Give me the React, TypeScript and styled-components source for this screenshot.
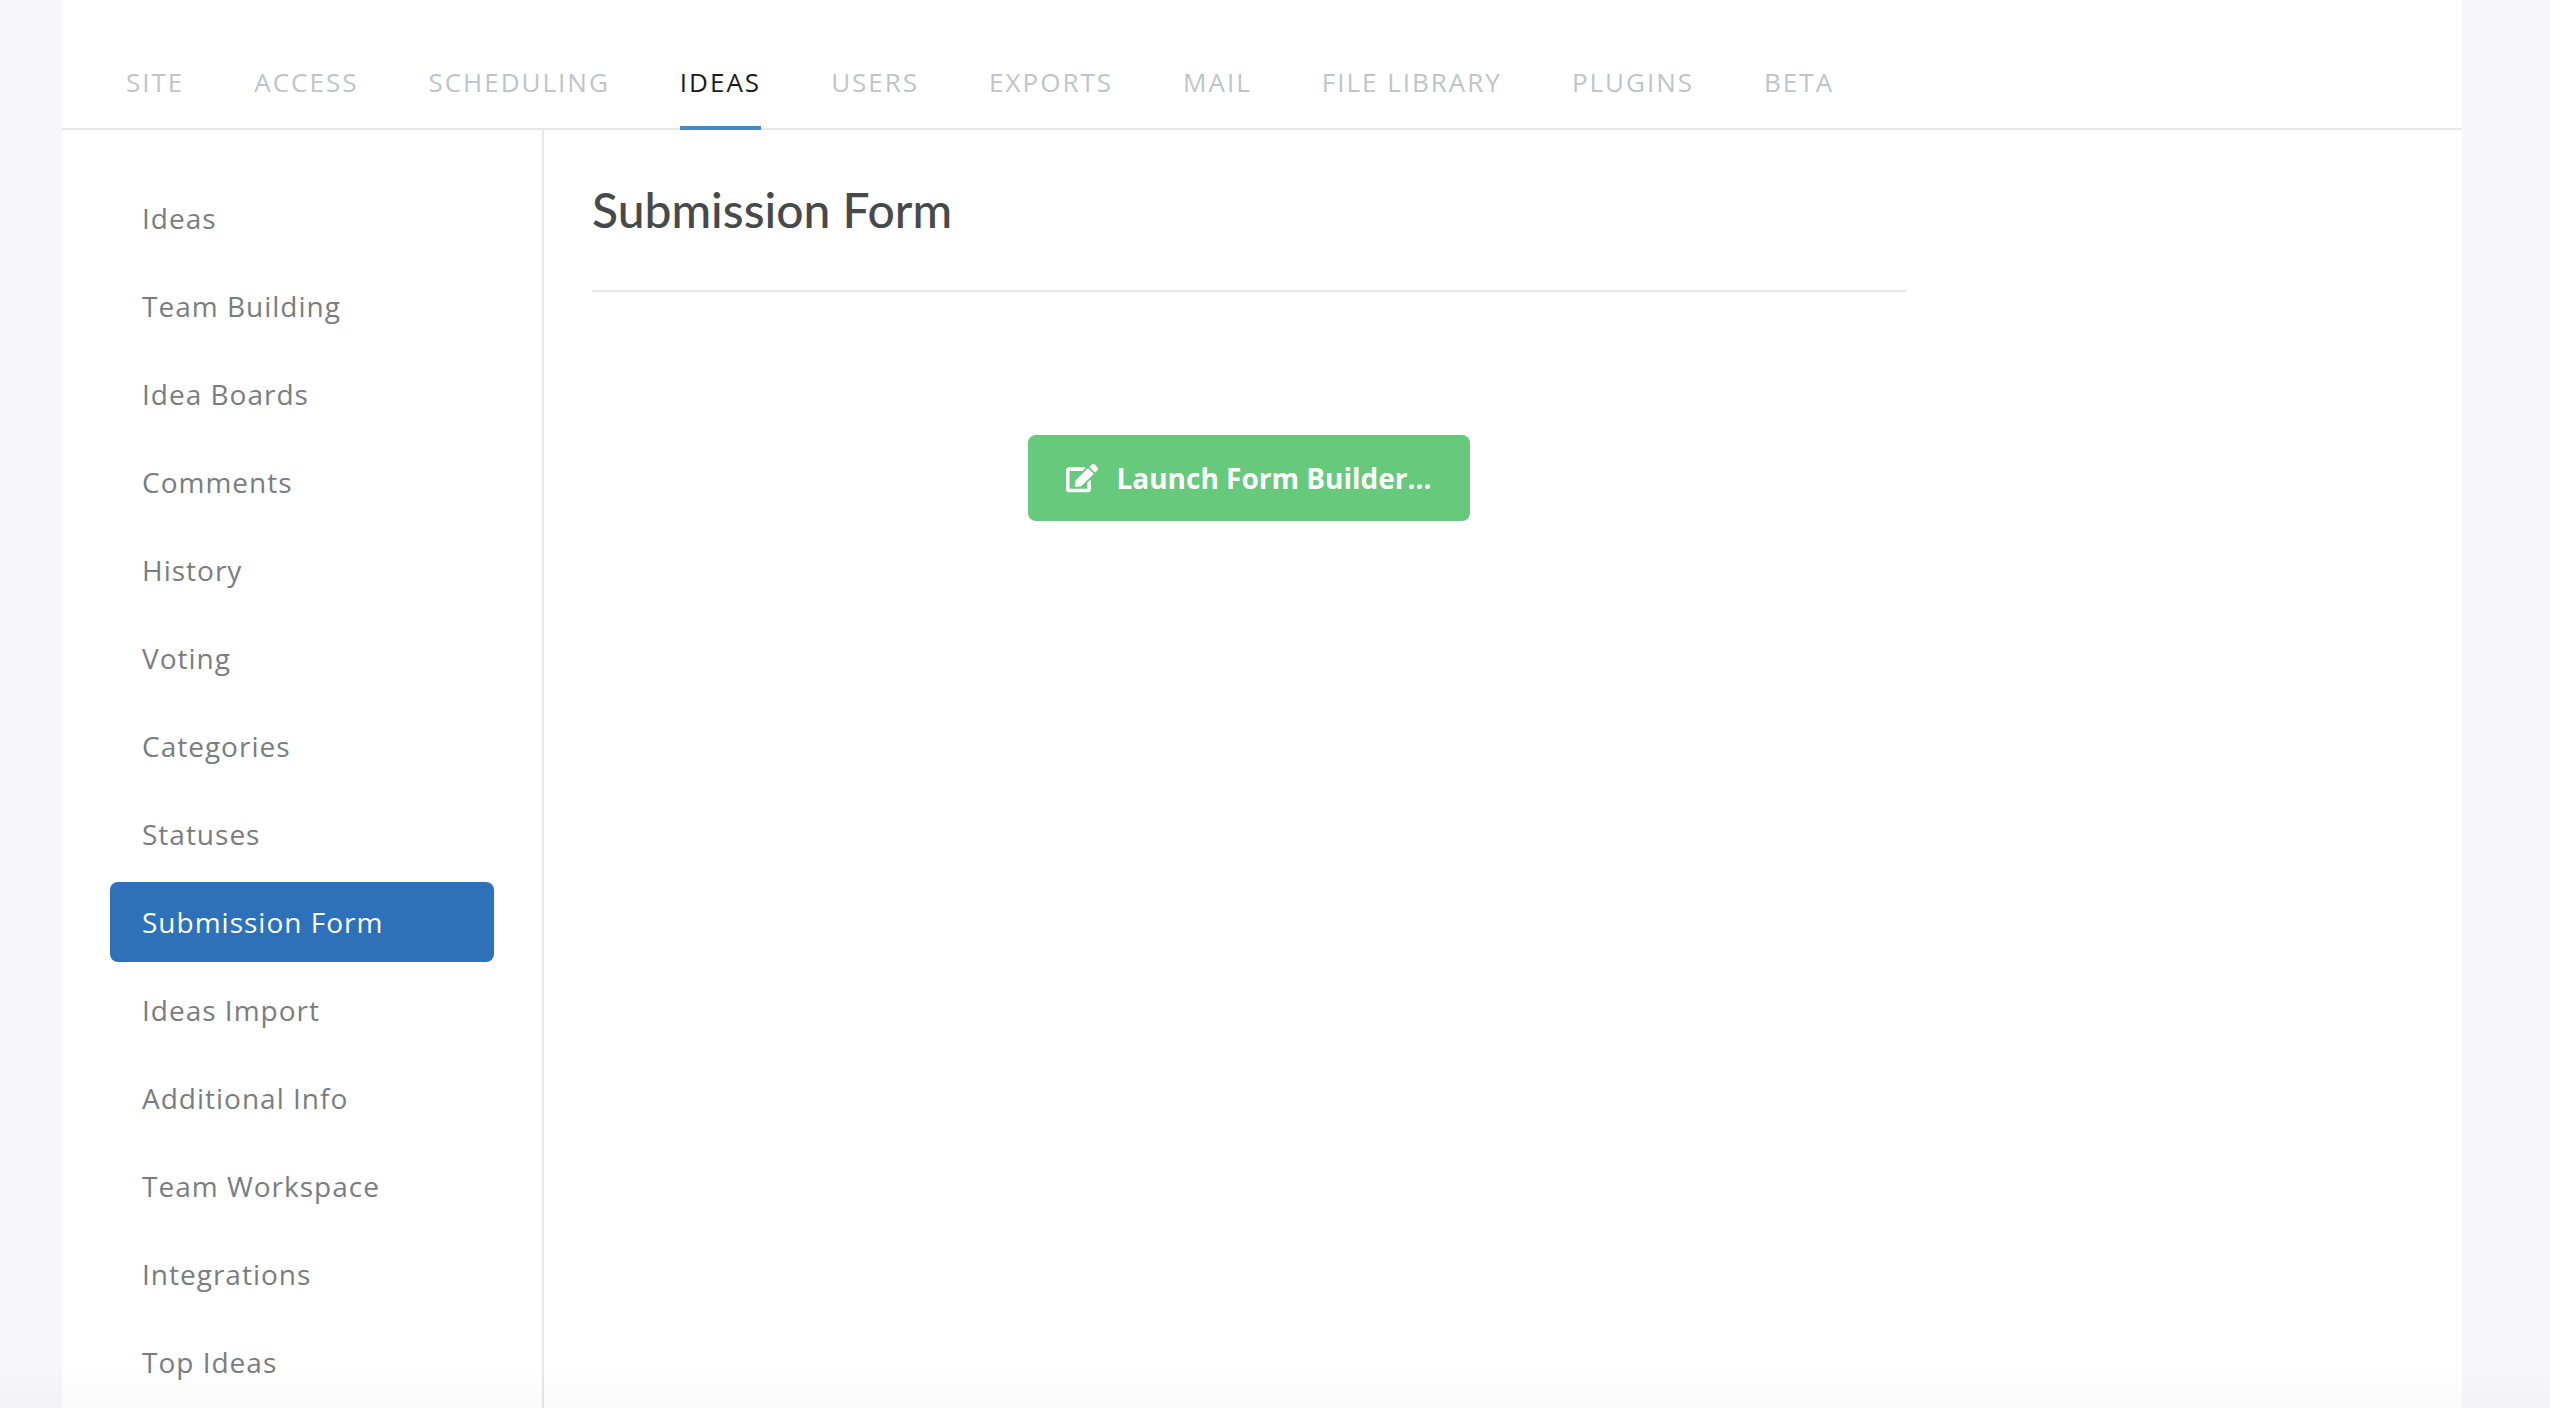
import React from "react";
import styled, { createGlobalStyle } from "styled-components";
import { FaEdit } from "react-icons/fa";

const GlobalStyle = createGlobalStyle`
  *, *::before, *::after { box-sizing: border-box; }
  body {
    margin: 0;
    background: #f6f6fb;
    font-family: "Open Sans", "Noto Sans", sans-serif;
    -webkit-font-smoothing: antialiased;
  }
`;

const Page = styled.div`
  height: 100vh;
  padding: 0 88px 0 62px;
  overflow: hidden;
`;

const Panel = styled.div`
  display: flex;
  flex-direction: column;
  min-height: 100%;
  background: #fff;
`;

const TopNav = styled.nav`
  display: flex;
  gap: 70px;
  height: 130px;
  padding: 0 64px;
  border-bottom: 2px solid #e8e8e8;
`;

const TopLink = styled.a<{ $active: boolean }>`
  display: flex;
  align-items: flex-end;
  margin-bottom: -2px;
  padding-bottom: ${(p) => (p.$active ? 26 : 30)}px;
  border-bottom: ${(p) => (p.$active ? "4px solid #4688c8" : "0")};
  color: ${(p) => (p.$active ? "#1b1c1d" : "#bfc4c8")};
  font-size: 26px;
  line-height: 36px;
  letter-spacing: 2px;
  text-transform: uppercase;
  text-decoration: none;
  white-space: nowrap;
`;

const Columns = styled.div`
  display: flex;
  flex: 1;
`;

const Sidebar = styled.nav`
  flex: 0 0 482px;
  padding: 48px;
  border-right: 2px solid #e8e8e8;
`;

const SideList = styled.ul`
  display: flex;
  flex-direction: column;
  gap: 8px;
  margin: 0;
  padding: 0;
  list-style: none;
`;

const SideLink = styled.a<{ $active: boolean }>`
  display: block;
  padding: 20px 32px;
  border-radius: 8px;
  background: ${(p) => (p.$active ? "#2e71b8" : "transparent")};
  color: ${(p) => (p.$active ? "#fff" : "#7a7d80")};
  font-size: 28px;
  line-height: 40px;
  letter-spacing: 1px;
  text-decoration: none;
`;

const Content = styled.main`
  flex: 1;
  padding: 48px;
`;

const Section = styled.section`
  display: flex;
  flex-direction: column;
  align-items: center;
  gap: 143px;
  max-width: 1314px;
`;

const Title = styled.h1`
  width: 100%;
  margin: 0;
  padding-bottom: 48px;
  border-bottom: 2px solid #e8e8e8;
  color: #47494b;
  font-family: Lato, sans-serif;
  font-size: 48px;
  font-weight: 500;
  line-height: 64px;
`;

const LaunchButton = styled.button`
  display: flex;
  align-items: center;
  gap: 18px;
  padding: 22px 38px;
  border: 0;
  border-radius: 8px;
  background: #67c97c;
  color: #fff;
  font-family: inherit;
  font-size: 28px;
  font-weight: 700;
  line-height: 42px;
  cursor: pointer;
`;

const BottomShade = styled.div`
  position: fixed;
  right: 0;
  bottom: 0;
  left: 0;
  height: 44px;
  background: linear-gradient(to bottom, rgba(0, 0, 0, 0), rgba(0, 0, 0, 0.02));
  pointer-events: none;
`;

const tabs = ["Site", "Access", "Scheduling", "Ideas", "Users", "Exports", "Mail", "File Library", "Plugins", "Beta"];

const sections = [
  "Ideas",
  "Team Building",
  "Idea Boards",
  "Comments",
  "History",
  "Voting",
  "Categories",
  "Statuses",
  "Submission Form",
  "Ideas Import",
  "Additional Info",
  "Team Workspace",
  "Integrations",
  "Top Ideas",
];

export default function App() {
  const activeTab = "Ideas";
  const activeSection = "Submission Form";

  return (
    <>
      <GlobalStyle />
      <Page>
        <Panel>
          <TopNav aria-label="Settings">
            {tabs.map((tab) => (
              <TopLink key={tab} href="#" $active={tab === activeTab} aria-current={tab === activeTab ? "page" : undefined}>
                {tab}
              </TopLink>
            ))}
          </TopNav>
          <Columns>
            <Sidebar aria-label="Ideas settings">
              <SideList>
                {sections.map((name) => (
                  <li key={name}>
                    <SideLink
                      href="#"
                      $active={name === activeSection}
                      aria-current={name === activeSection ? "page" : undefined}
                    >
                      {name}
                    </SideLink>
                  </li>
                ))}
              </SideList>
            </Sidebar>
            <Content>
              <Section>
                <Title>Submission Form</Title>
                <LaunchButton type="button">
                  <FaEdit size={32} aria-hidden="true" />
                  Launch Form Builder...
                </LaunchButton>
              </Section>
            </Content>
          </Columns>
        </Panel>
      </Page>
      <BottomShade />
    </>
  );
}
